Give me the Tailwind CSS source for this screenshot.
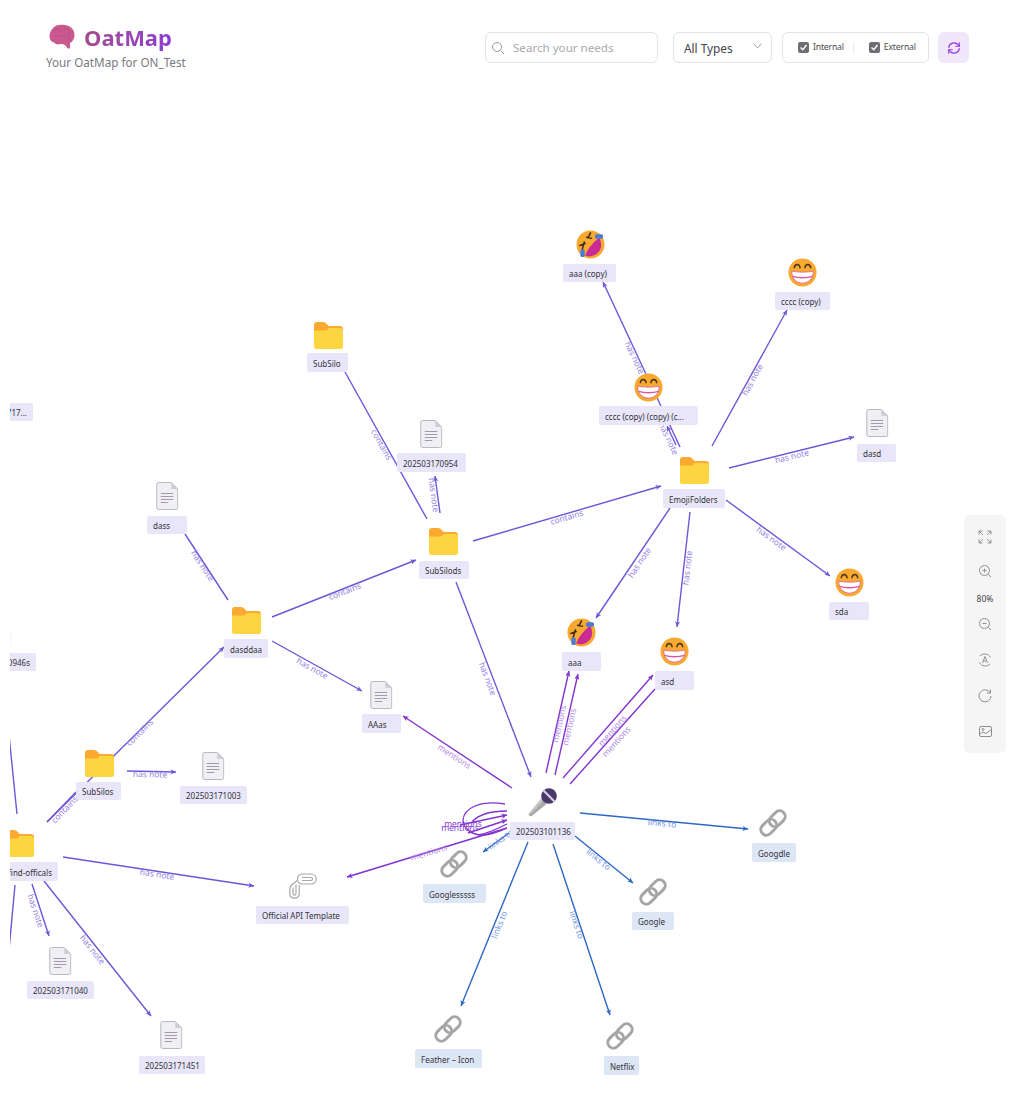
<!DOCTYPE html>
<html lang="en">
<head>
    <meta charset="UTF-8">
    <title>OatMap</title>
    <script src="https://cdn.jsdelivr.net/npm/@tailwindcss/browser@4"></script>
</head>
<body class="bg-white font-['Noto_Sans',sans-serif]">

    <!-- shared node icons -->
    <svg class="hidden">
        <symbol id="folder" viewBox="0 0 29 27">
            <path d="M0 3a3 3 0 0 1 3-3h6c1.500 0 2.500 .8 3.500 1.800L14.500 4H26a3 3 0 0 1 3 3v8H0z" fill="#fba931"/>
            <path d="M0 8.500h11c1.500 0 2.500-.5 3.500-2.500H26a3 3 0 0 1 3 3v16a2 2 0 0 1-2 2H2a2 2 0 0 1-2-2z" fill="#fdd540"/>
        </symbol>
        <symbol id="doc" viewBox="0 0 22 28">
            <path d="M2.500 .5H15L21.500 7V25.500a2 2 0 0 1-2 2H2.500a2 2 0 0 1-2-2V2.500a2 2 0 0 1 2-2z" fill="#f0eff3" stroke="#b9b8c0"/>
            <path d="M15 .5V7H21.500z" fill="#cfced6"/>
            <path d="M4.500 11.500H17M4.500 14.500H17M4.500 17.500H17M4.500 20.500H12" stroke="#a39bab" stroke-width="1"/>
        </symbol>
        <symbol id="grin" viewBox="0 0 30 30">
            <circle cx="15" cy="15" r="14.500" fill="#f8a92f"/>
            <path d="M4 13.500C9 15 21 15 26 13.500C26.500 21 21.500 26 15 26C8.500 26 3.500 21 4 13.500z" fill="#fff" stroke="#d8589f" stroke-width=".8"/>
            <path d="M4.800 19C10 20.800 20 20.800 25.200 19" fill="none" stroke="#d8589f" stroke-width="1.600"/>
            <path d="M6.500 10C7.200 5.500 11.800 5.500 12.500 10M17.500 10C18.200 5.500 22.800 5.500 23.500 10" fill="none" stroke="#4a3320" stroke-width="1.500" stroke-linecap="round"/>
        </symbol>
        <symbol id="rofl" viewBox="0 0 30 30">
            <circle cx="15" cy="15" r="14.500" fill="#f8a92f"/>
            <path d="M24 8C27 14 27 20 22 24C18 27.500 13 28 9.500 26.500C12 20 17 13 24 8z" fill="#c92a96"/>
            <path d="M11 7.500L16 8.500M15 3L12.500 8" fill="none" stroke="#3b2a1a" stroke-width="1.600" stroke-linecap="round"/>
            <path d="M4 16L9.500 14M8.500 12.500L6.500 20" fill="none" stroke="#3b2a1a" stroke-width="1.600" stroke-linecap="round"/>
            <rect x="19.500" y="4.500" width="8.500" height="4.500" rx="2" fill="#4a7bd8"/>
            <rect x="4.500" y="20" width="4.500" height="8" rx="2" fill="#4a7bd8"/>
        </symbol>
        <symbol id="chain" viewBox="0 0 30 30">
            <g fill="none" stroke="#a5a5a5" stroke-width="3.200" transform="rotate(-45 15 15)">
                <rect x="-1" y="9" width="19" height="12" rx="6"/>
                <rect x="12" y="9" width="19" height="12" rx="6"/>
            </g>
        </symbol>
    </svg>

    <div class="relative w-[1024px] h-[1113px] overflow-hidden bg-white">

        <!-- top bar -->
        <header class="relative z-10 flex justify-between items-start pl-[46px] pr-[55px] pt-[22px]">
            <div>
                <div class="flex items-center gap-[9px] pl-[3px] h-[30px]">
                    <svg class="w-[26px] h-[26px]" viewBox="0 0 26 26">
                        <path d="M3 5.500C5 1.500 10 .5 14 .8C20 .8 25.500 4.500 25.500 11C25.500 15.500 23 18 21 19C21 21 21.500 23 20.500 24.500C19 25 18 24 16.500 21.500C15 20 13.500 20 11.500 20C9.500 21 6.500 20.500 5 18.500C2.500 18 .5 15.500 .5 12.500C.5 9.500 1.500 7 3 5.500z" fill="#c9598f"/>
                        <path d="M6 6C9 4 12 6 12 8M15 4C19 4 21 7 20 10M5 12C8 10.500 11 12 12 14M14 12C17 11 20 13 21 16" fill="none" stroke="#b84f84" stroke-width="1" stroke-linecap="round"/>
                    </svg>
                    <h1 class="text-[22px] leading-[30px] font-bold text-transparent bg-clip-text bg-gradient-to-r from-[#a64a8c] to-[#8b3bd6]">OatMap</h1>
                </div>
                <p class="mt-[1px] text-[11.700px] leading-[18px] text-[#7a7a80]">Your OatMap for ON_Test</p>
            </div>

            <div class="flex items-center mt-[10px] h-[31px]">
                <div class="flex items-center w-[173px] h-[31px] border border-[#e3e3e6] rounded-[6px] pl-[2px]">
                    <svg class="w-[14px] h-[14px] ml-[3px]" viewBox="0 0 14 14" fill="none" stroke="#9a9a9a" stroke-width="1">
                        <circle cx="6" cy="6" r="4.500"/><path d="M9.500 9.500L13 13"/>
                    </svg>
                    <span class="ml-[8px] pt-[1px] text-[11.600px] text-[#a9a9ad]">Search your needs</span>
                </div>
                <div class="flex items-center justify-between w-[99px] h-[31px] ml-[15px] border border-[#e3e3e6] rounded-[6px] pl-[10px] pr-[9px]">
                    <span class="pt-[2px] text-[11.800px] text-[#44444a]">All Types</span>
                    <svg class="w-[9px] h-[6px] mb-[3px]" viewBox="0 0 9 6" fill="none" stroke="#a0a0a4" stroke-width="1"><path d="M.5 .5L4.500 5L8.500 .5"/></svg>
                </div>
                <div class="flex items-center w-[147px] h-[31px] ml-[10px] border border-[#e3e3e6] rounded-[6px] pl-[15px]">
                    <span class="flex items-center justify-center w-[11px] h-[11px] rounded-[2px] bg-[#6f6f73]">
                        <svg class="w-[9px] h-[9px]" viewBox="0 0 9 9" fill="none" stroke="#fff" stroke-width="1.400"><path d="M1.500 4.500L3.800 6.800L7.500 2"/></svg>
                    </span>
                    <span class="ml-[4px] text-[8.700px] text-[#4b4b50] tracking-[-0.2px]">Internal</span>
                    <span class="w-px h-[12px] bg-[#ececee] ml-[9px]"></span>
                    <span class="flex items-center justify-center w-[11px] h-[11px] ml-[15px] rounded-[2px] bg-[#6f6f73]">
                        <svg class="w-[9px] h-[9px]" viewBox="0 0 9 9" fill="none" stroke="#fff" stroke-width="1.400"><path d="M1.500 4.500L3.800 6.800L7.500 2"/></svg>
                    </span>
                    <span class="ml-[4px] text-[8.700px] text-[#4b4b50] tracking-[-0.2px]">External</span>
                </div>
                <button class="flex items-center justify-center w-[31px] h-[31px] ml-[9px] rounded-[6px] bg-[#f0e7fb]">
                    <svg class="w-[14px] h-[14px]" viewBox="0 0 24 24" fill="none" stroke="#9333ea" stroke-width="2" stroke-linecap="round" stroke-linejoin="round">
                        <path d="M21 3v6h-6"/><path d="M3 11a9 9 0 0 1 15.500-5L21 9"/><path d="M3 21v-6h6"/><path d="M21 13a9 9 0 0 1-15.500 5L3 15"/>
                    </svg>
                </button>
            </div>
        </header>

        <!-- graph canvas, cut off 10px from the left edge -->
        <div class="absolute inset-0 [clip-path:inset(0_0_0_10px)]">
            <svg id="edges" class="absolute inset-0 w-[1024px] h-[1113px]" viewBox="0 0 1024 1113"></svg>

            <!-- cut off nodes on the left -->
            <div class="absolute left-[-30px] top-[403px] w-[63px] h-[18px] pt-[1px] rounded-[2px] bg-[#e8e6f8] text-[8px] leading-[18px] text-right pr-[6px] text-[#33333b]">2025031717...</div>
            <svg class="absolute left-[-12px] top-[621px] w-[22.500px] h-[28px]"><use href="#doc"/></svg>
            <div class="absolute left-[-30px] top-[653px] w-[66px] h-[18px] pt-[1px] rounded-[2px] bg-[#e8e6f8] text-[8px] leading-[18px] text-right pr-[6px] text-[#33333b]">2025030946s</div>
            <svg class="absolute left-[5px] top-[830px] w-[29px] h-[27px]"><use href="#folder"/></svg>
            <div class="absolute left-[-10px] top-[862px] w-[68px] h-[19px] pt-[1px] rounded-[2px] bg-[#e8e6f8] text-[8px] leading-[19px] text-right pr-[6px] text-[#33333b]">find-officals</div>

            <!-- notes and silos -->
            <svg class="absolute left-[576px] top-[230px] w-[29px] h-[29px]"><use href="#rofl"/></svg>
            <div class="absolute left-[563px] top-[264px] w-[53px] h-[18px] pt-[1px] rounded-[2px] bg-[#e8e6f8] text-[8px] leading-[18px] pl-[6px] text-[#33333b]">aaa (copy)</div>

            <svg class="absolute left-[788px] top-[258px] w-[29px] h-[29px]"><use href="#grin"/></svg>
            <div class="absolute left-[775px] top-[292px] w-[55px] h-[18px] pt-[1px] rounded-[2px] bg-[#e8e6f8] text-[8px] leading-[18px] pl-[6px] text-[#33333b]">cccc (copy)</div>

            <svg class="absolute left-[634px] top-[373px] w-[29px] h-[29px]"><use href="#grin"/></svg>
            <div class="absolute left-[599px] top-[406px] w-[99px] h-[19px] pt-[1px] rounded-[2px] bg-[#e8e6f8] text-[8px] leading-[19px] pl-[6px] text-[#33333b]">cccc (copy) (copy) (c...</div>

            <svg class="absolute left-[680px] top-[457px] w-[29px] h-[27px]"><use href="#folder"/></svg>
            <div class="absolute left-[663px] top-[489px] w-[62px] h-[19px] pt-[1px] rounded-[2px] bg-[#e8e6f8] text-[8px] leading-[19px] pl-[6px] text-[#33333b]">EmojiFolders</div>

            <svg class="absolute left-[866px] top-[409px] w-[22.500px] h-[28px]"><use href="#doc"/></svg>
            <div class="absolute left-[857px] top-[444px] w-[39px] h-[18px] pt-[1px] rounded-[2px] bg-[#e8e6f8] text-[8px] leading-[18px] pl-[6px] text-[#33333b]">dasd</div>

            <svg class="absolute left-[314px] top-[322px] w-[29px] h-[27px]"><use href="#folder"/></svg>
            <div class="absolute left-[307px] top-[353px] w-[41px] h-[19px] pt-[1px] rounded-[2px] bg-[#e8e6f8] text-[8px] leading-[19px] pl-[6px] text-[#33333b]">SubSilo</div>

            <svg class="absolute left-[420px] top-[420px] w-[22.500px] h-[28px]"><use href="#doc"/></svg>
            <div class="absolute left-[397px] top-[453px] w-[69px] h-[19px] pt-[1px] rounded-[2px] bg-[#e8e6f8] text-[8px] leading-[19px] pl-[6px] text-[#33333b]">202503170954</div>

            <svg class="absolute left-[429px] top-[528px] w-[29px] h-[27px]"><use href="#folder"/></svg>
            <div class="absolute left-[419px] top-[561px] w-[50px] h-[18px] pt-[1px] rounded-[2px] bg-[#e8e6f8] text-[8px] leading-[18px] pl-[6px] text-[#33333b]">SubSilods</div>

            <svg class="absolute left-[156px] top-[482px] w-[22.500px] h-[28px]"><use href="#doc"/></svg>
            <div class="absolute left-[147px] top-[516px] w-[40px] h-[18px] pt-[1px] rounded-[2px] bg-[#e8e6f8] text-[8px] leading-[18px] pl-[6px] text-[#33333b]">dass</div>

            <svg class="absolute left-[232px] top-[607px] w-[29px] h-[27px]"><use href="#folder"/></svg>
            <div class="absolute left-[224px] top-[639px] w-[44px] h-[19px] pt-[1px] rounded-[2px] bg-[#e8e6f8] text-[8px] leading-[19px] pl-[6px] text-[#33333b]">dasddaa</div>

            <svg class="absolute left-[567px] top-[618px] w-[29px] h-[29px]"><use href="#rofl"/></svg>
            <div class="absolute left-[562px] top-[652px] w-[39px] h-[19px] pt-[1px] rounded-[2px] bg-[#e8e6f8] text-[8px] leading-[19px] pl-[6px] text-[#33333b]">aaa</div>

            <svg class="absolute left-[660px] top-[637px] w-[29px] h-[29px]"><use href="#grin"/></svg>
            <div class="absolute left-[655px] top-[671px] w-[39px] h-[19px] pt-[1px] rounded-[2px] bg-[#e8e6f8] text-[8px] leading-[19px] pl-[6px] text-[#33333b]">asd</div>

            <svg class="absolute left-[835px] top-[568px] w-[29px] h-[29px]"><use href="#grin"/></svg>
            <div class="absolute left-[829px] top-[602px] w-[40px] h-[18px] pt-[1px] rounded-[2px] bg-[#e8e6f8] text-[8px] leading-[18px] pl-[6px] text-[#33333b]">sda</div>

            <svg class="absolute left-[370px] top-[681px] w-[22.500px] h-[28px]"><use href="#doc"/></svg>
            <div class="absolute left-[362px] top-[714px] w-[39px] h-[19px] pt-[1px] rounded-[2px] bg-[#e8e6f8] text-[8px] leading-[19px] pl-[6px] text-[#33333b]">AAas</div>

            <svg class="absolute left-[528px] top-[788px] w-[29px] h-[29px]" viewBox="0 0 29 29">
                <path d="M13.500 10.500L18.500 16L4 27.800C3 28.500 2 28.500 1.200 27.600C.5 26.800 .5 26 1.300 25z" fill="#a9a9a9"/>
                <path d="M13.500 10.500L15.500 12.700L2 26.800L1.300 25z" fill="#c4c4c4"/>
                <circle cx="21" cy="8" r="7.800" fill="#4c3769"/>
                <path d="M14.500 11.500C15 13.500 16 14.800 18 15.500L14.500 13z" fill="#8a7a9a"/>
                <path d="M15.500 2.500L26.500 13.500" stroke="#d8cfe4" stroke-width="2.200"/>
            </svg>
            <div class="absolute left-[510px] top-[822px] w-[65px] h-[18px] pt-[1px] rounded-[2px] bg-[#e8e6f8] text-[8px] leading-[18px] pl-[6px] text-[#33333b]">202503101136</div>

            <svg class="absolute left-[85px] top-[750px] w-[29px] h-[27px]"><use href="#folder"/></svg>
            <div class="absolute left-[76px] top-[782px] w-[45px] h-[18px] pt-[1px] rounded-[2px] bg-[#e8e6f8] text-[8px] leading-[18px] pl-[6px] text-[#33333b]">SubSilos</div>

            <svg class="absolute left-[202px] top-[752px] w-[22.500px] h-[28px]"><use href="#doc"/></svg>
            <div class="absolute left-[180px] top-[786px] w-[67px] h-[18px] pt-[1px] rounded-[2px] bg-[#e8e6f8] text-[8px] leading-[18px] pl-[6px] text-[#33333b]">202503171003</div>

            <svg class="absolute left-[49px] top-[947px] w-[22.500px] h-[28px]"><use href="#doc"/></svg>
            <div class="absolute left-[27px] top-[981px] w-[67px] h-[18px] pt-[1px] rounded-[2px] bg-[#e8e6f8] text-[8px] leading-[18px] pl-[6px] text-[#33333b]">202503171040</div>

            <svg class="absolute left-[160px] top-[1021px] w-[22.500px] h-[28px]"><use href="#doc"/></svg>
            <div class="absolute left-[139px] top-[1056px] w-[66px] h-[18px] pt-[1px] rounded-[2px] bg-[#e8e6f8] text-[8px] leading-[18px] pl-[6px] text-[#33333b]">202503171451</div>

            <svg class="absolute left-[289px] top-[873px] w-[28px] h-[26px]" viewBox="0 0 28 26" fill="none" stroke="#a8a8a8" stroke-width="1.200">
                <path d="M8.500 7.500L2.500 12C1 13.500 .8 15 .8 17V20.500C.8 23.500 3 25.200 5.500 25.200C8 25.200 10.200 23.500 10.200 20.500V12"/>
                <path d="M4 14.500V20.500C4 22.800 7 22.800 7 20.500V11.500"/>
                <path d="M13 1H22C25 1 27.200 3 27.200 6C27.200 9 25 11 22 11H13C10.500 11 8.500 9 8.500 6C8.500 3 10.500 1 13 1z"/>
                <path d="M13 4.500H22C24 4.500 24 7.500 22 7.500H13"/>
            </svg>
            <div class="absolute left-[256px] top-[906px] w-[93px] h-[18px] pt-[1px] rounded-[2px] bg-[#e8e6f8] text-[8px] leading-[18px] pl-[6px] text-[#33333b]">Official API Template</div>

            <!-- links -->
            <svg class="absolute left-[440px] top-[850px] w-[28px] h-[28px]"><use href="#chain"/></svg>
            <div class="absolute left-[423px] top-[884px] w-[63px] h-[19px] pt-[1px] rounded-[2px] bg-[#dde6f5] text-[8px] leading-[19px] pl-[6px] text-[#33333b]">Googlesssss</div>

            <svg class="absolute left-[639px] top-[878px] w-[28px] h-[28px]"><use href="#chain"/></svg>
            <div class="absolute left-[632px] top-[912px] w-[42px] h-[18px] pt-[1px] rounded-[2px] bg-[#dde6f5] text-[8px] leading-[18px] pl-[6px] text-[#33333b]">Google</div>

            <svg class="absolute left-[759px] top-[809px] w-[28px] h-[28px]"><use href="#chain"/></svg>
            <div class="absolute left-[752px] top-[843px] w-[44px] h-[19px] pt-[1px] rounded-[2px] bg-[#dde6f5] text-[8px] leading-[19px] pl-[6px] text-[#33333b]">Googdle</div>

            <svg class="absolute left-[434px] top-[1015px] w-[28px] h-[28px]"><use href="#chain"/></svg>
            <div class="absolute left-[415px] top-[1049px] w-[67px] h-[19px] pt-[1px] rounded-[2px] bg-[#dde6f5] text-[8px] leading-[19px] pl-[6px] text-[#33333b]">Feather – Icon</div>

            <svg class="absolute left-[606px] top-[1022px] w-[28px] h-[28px]"><use href="#chain"/></svg>
            <div class="absolute left-[604px] top-[1056px] w-[35px] h-[19px] pt-[1px] rounded-[2px] bg-[#dde6f5] text-[8px] leading-[19px] pl-[6px] text-[#33333b]">Netflix</div>
        </div>

        <!-- zoom toolbar -->
        <div class="absolute left-[964px] top-[515px] z-10 flex flex-col items-center w-[42px] h-[238px] rounded-[6px] bg-[#f5f5f5] pt-[15px]">
            <svg class="w-[14px] h-[14px]" viewBox="0 0 14 14" fill="none" stroke="#8f8f8f" stroke-width="1">
                <path d="M1 4.500V1H4.500M1 1L5 5M13 4.500V1H9.500M13 1L9 5M1 9.500V13H4.500M1 13L5 9M13 9.500V13H9.500M13 13L9 9"/>
            </svg>
            <svg class="w-[14px] h-[14px] mt-[20px]" viewBox="0 0 14 14" fill="none" stroke="#8f8f8f" stroke-width="1">
                <circle cx="6.500" cy="6.500" r="5"/><path d="M10.200 10.200L13 13M4.500 6.500H8.500M6.500 4.500V8.500"/>
            </svg>
            <span class="mt-[14px] text-[8.500px] leading-[14px] text-[#444]">80%</span>
            <svg class="w-[14px] h-[14px] mt-[11px]" viewBox="0 0 14 14" fill="none" stroke="#8f8f8f" stroke-width="1">
                <circle cx="6.500" cy="6.500" r="5"/><path d="M10.200 10.200L13 13M4.500 6.500H8.500"/>
            </svg>
            <svg class="w-[14px] h-[14px] mt-[22px]" viewBox="0 0 14 14" fill="none" stroke="#8f8f8f" stroke-width="1">
                <path d="M2 3A6.500 6.500 0 0 1 12.500 4.500M12 11A6.500 6.500 0 0 1 1.500 9.500"/>
                <path d="M4.500 10L7 3.500L9.500 10M5.500 8H8.500"/>
            </svg>
            <svg class="w-[14px] h-[14px] mt-[22px]" viewBox="0 0 14 14" fill="none" stroke="#8f8f8f" stroke-width="1">
                <path d="M12 3.500A6 6 0 1 0 13 7M12.500 .5V4H9"/>
            </svg>
            <svg class="w-[13px] h-[13px] mt-[22px]" viewBox="0 0 13 13" fill="none" stroke="#8f8f8f" stroke-width="1">
                <rect x=".5" y="1.500" width="12" height="10" rx="1.500"/><circle cx="4" cy="4.500" r="1"/><path d="M.5 9L4 7L7 8.500L12.500 4.500"/>
            </svg>
        </div>
    </div>

    <script>
        // type colours: [line, label]
        const colors = {
            note: ['#6f56d8', '#9484e6'],
            mention: ['#8233d0', '#b08aea'],
            link: ['#2f66c8', '#6f93e6']
        };

        // x1, y1, x2, y2, type, text, label x, label y, arrow
        const edges = [
            [680, 447, 603, 282, 'note', 'has note', 634, 358, true],
            [676, 445, 667, 426, 'note', 'has note', 668, 439, true],
            [712, 446, 787, 310, 'note', 'has note', 753, 380, true],
            [729, 468, 854, 437, 'note', 'has note', 792, 457, true],
            [473, 541, 661, 486, 'note', 'contains', 567, 518, true],
            [726, 500, 830, 576, 'note', 'has note', 771, 539, true],
            [670, 508, 596, 618, 'note', 'has note', 640, 563, true],
            [690, 512, 677, 627, 'note', 'has note', 688, 568, true],
            [427, 519, 345, 372, 'note', 'contains', 381, 445, false],
            [440, 513, 435, 476, 'note', 'has note', 433, 495, true],
            [272, 617, 416, 560, 'note', 'contains', 345, 592, true],
            [228, 600, 185, 534, 'note', 'has note', 202, 566, false],
            [272, 641, 362, 691, 'note', 'has note', 312, 669, true],
            [456, 582, 531, 777, 'note', 'has note', 487, 679, true],
            [47, 822, 224, 647, 'note', 'contains', 140, 733, true],
            [47, 822, 76, 792, 'note', 'contains', 65, 810, false],
            [127, 771, 176, 772, 'note', 'has note', 150, 775, true],
            [63, 857, 254, 886, 'note', 'has note', 157, 875, true],
            [32, 884, 49, 936, 'note', 'has note', 35, 911, true],
            [44, 881, 151, 1016, 'note', 'has note', 92, 950, true],
            [9, 735, 17, 814, 'note', '', 0, 0, false],
            [15, 885, 9, 950, 'note', 'has note', 5, 968, false],
            [512, 788, 403, 716, 'mention', 'mentions', 454, 757, true],
            [546, 773, 569, 671, 'mention', 'mentions', 560, 724, true],
            [555, 775, 578, 674, 'mention', 'mentions', 570, 727, true],
            [563, 778, 653, 675, 'mention', 'mentions', 613, 731, true],
            [570, 784, 655, 689, 'mention', 'mentions', 617, 742, false],
            [507, 828, 347, 877, 'mention', 'mentions', 429, 853, true],
            [460, 825, 507, 815, 'mention', '', 0, 0, true],
            [468, 833, 507, 820, 'mention', '', 0, 0, true],
            [580, 813, 748, 829, 'link', 'links to', 662, 824, true],
            [575, 836, 633, 883, 'link', 'links to', 598, 860, true],
            [553, 844, 610, 1015, 'link', 'links to', 576, 925, true],
            [528, 842, 461, 1006, 'link', 'links to', 500, 925, true],
            [509, 833, 483, 852, 'link', 'links to', 501, 840, true]
        ];

        const svg = document.getElementById('edges');
        const NS = 'http://www.w3.org/2000/svg';

        function add(tag, attrs, text) {
            const el = document.createElementNS(NS, tag);
            for (const k in attrs) el.setAttribute(k, attrs[k]);
            if (text) el.textContent = text;
            svg.appendChild(el);
        }

        edges.forEach(([x1, y1, x2, y2, type, text, lx, ly, arrow]) => {
            const [line, label] = colors[type];
            add('line', { x1, y1, x2, y2, stroke: line, 'stroke-width': 1.4 });
            const a = Math.atan2(y2 - y1, x2 - x1);
            if (arrow) {
                const p = (d, s) => (x2 - d * Math.cos(a) + s * Math.sin(a)) + ',' + (y2 - d * Math.sin(a) - s * Math.cos(a));
                add('polygon', { points: `${x2},${y2} ${p(5.5, 2.6)} ${p(4, 0)} ${p(5.5, -2.6)}`, fill: line });
            }
            if (text) {
                let deg = a * 180 / Math.PI;
                if (deg > 90) deg -= 180;
                if (deg < -90) deg += 180;
                add('text', {
                    x: lx, y: ly, fill: label, 'font-size': 8.5, 'text-anchor': 'middle', 'dominant-baseline': 'middle',
                    transform: `rotate(${deg} ${lx} ${ly})`
                }, text);
            }
        });

        // self referencing mentions on the mic note
        ['M505 804C480 800 464 808 463 820C463 828 472 836 485 835C495 834 502 830 507 828',
         'M507 811C490 811 478 815 472 822',
         'M507 824C495 830 485 834 478 835'].forEach(d => {
            add('path', { d, fill: 'none', stroke: '#8233d0', 'stroke-width': 1.3 });
        });
        add('text', { x: 463, y: 827, fill: '#8a3fd8', 'font-size': 8.5, 'text-anchor': 'middle' }, 'mentions');
        add('text', { x: 460, y: 831, fill: '#8a3fd8', 'font-size': 8.5, 'text-anchor': 'middle' }, 'mentions');
    </script>
</body>
</html>
